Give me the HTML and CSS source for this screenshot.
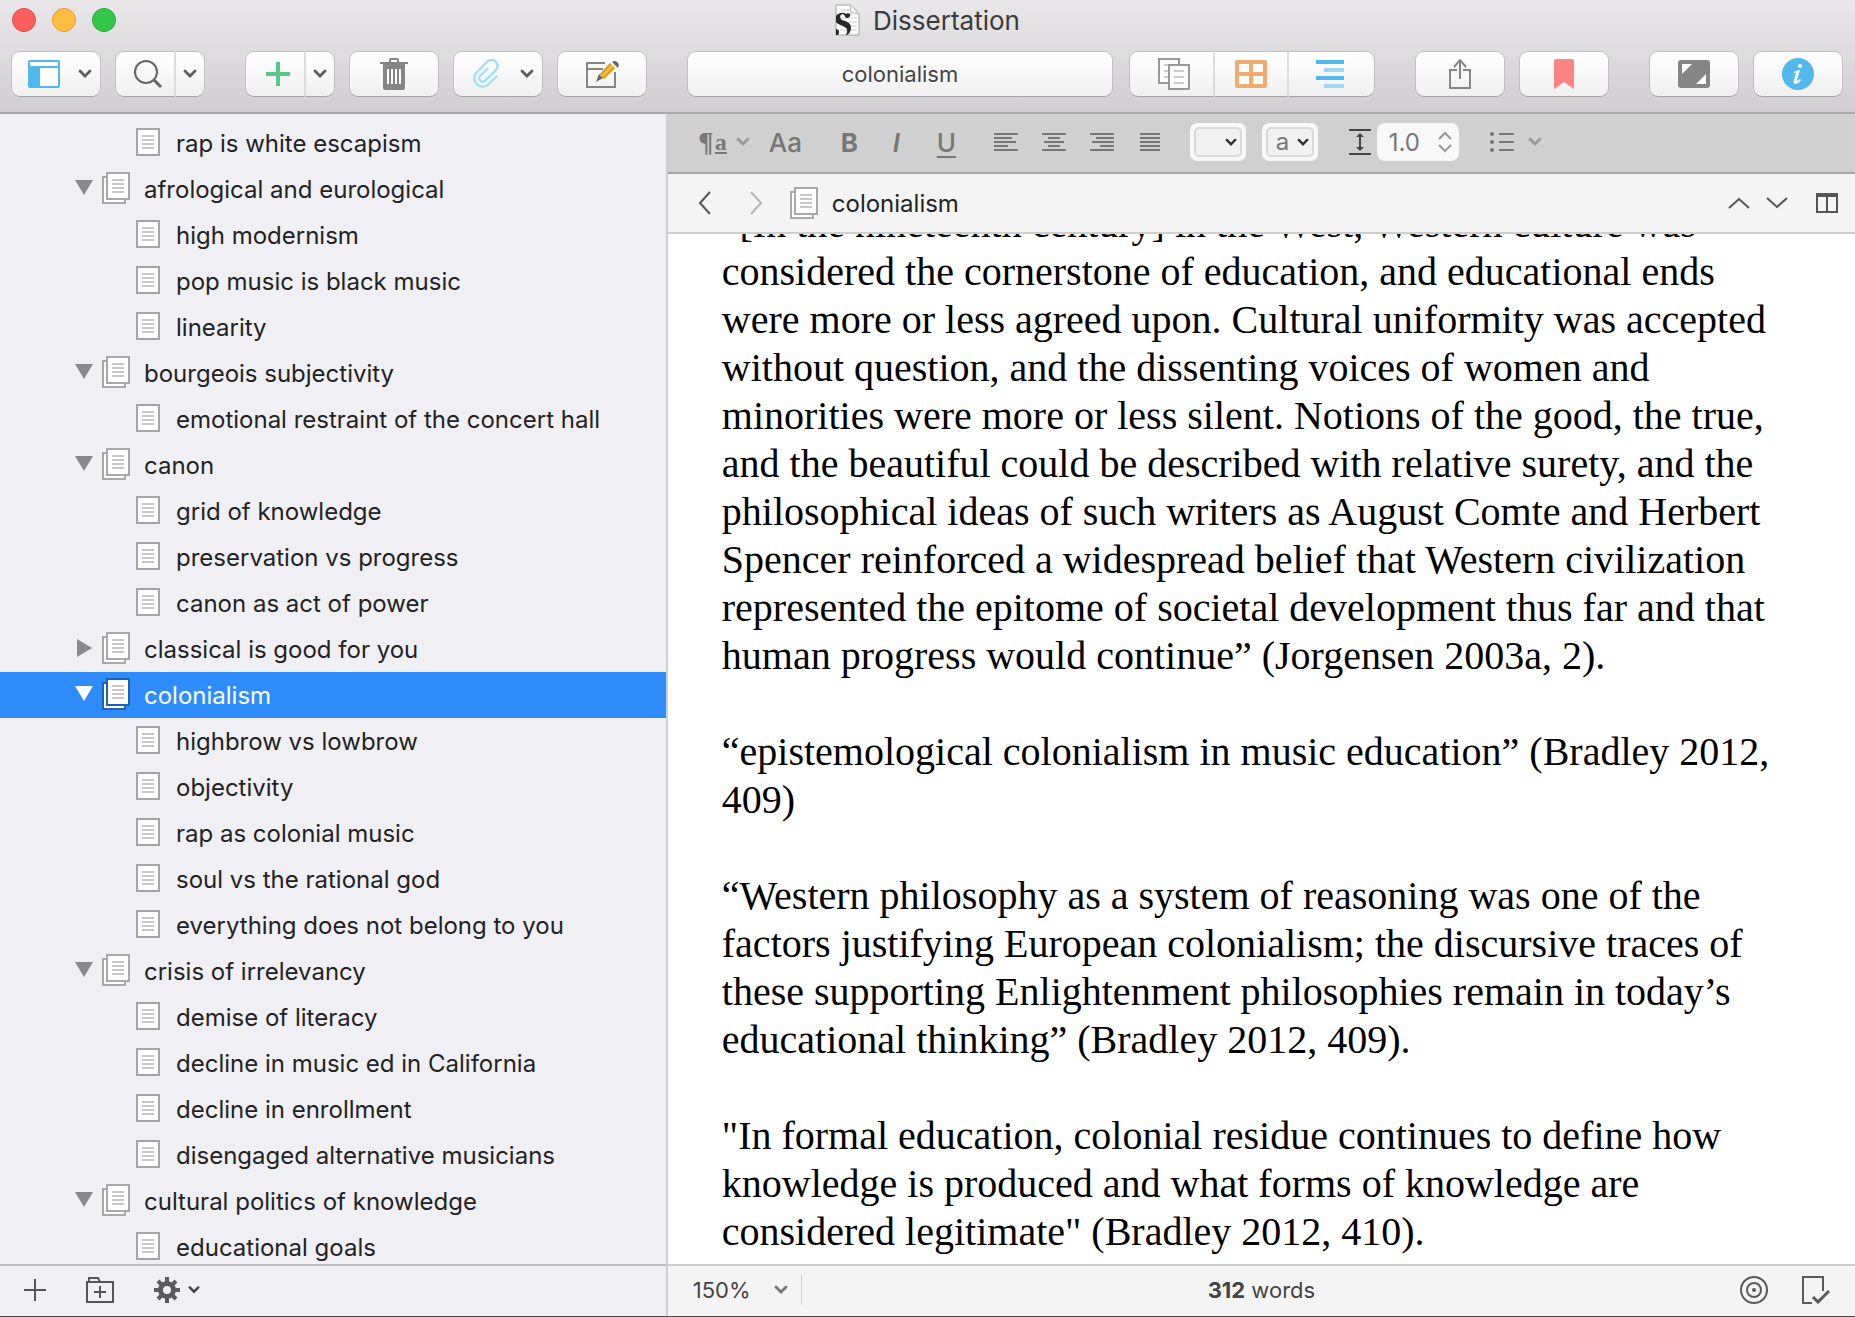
FILE: index.html
```html
<!DOCTYPE html>
<html lang="en">
<head>
<meta charset="utf-8">
<meta name="viewport" content="width=device-width, initial-scale=1">
<title>Dissertation</title>
<link rel="stylesheet" href="styles.css">
</head>
<body>
<svg class="symbols" aria-hidden="true">
  <symbol id="chevron" viewBox="0 0 14 10"><path d="M2 2l5 5 5-5" fill="none" stroke="currentColor" stroke-width="2.8" stroke-linecap="round"/></symbol>
  <symbol id="doc" viewBox="0 0 24 28"><path d="M1 1h22v26H1z" fill="#fff" stroke="#a5a5a5" stroke-width="2"/><path d="M6 8h12M6 12h12M6 16h12M6 20h12" stroke="#c8c8c8" stroke-width="2"/></symbol>
  <symbol id="stack" viewBox="0 0 28 32"><path d="M1 5h22v26H1z" fill="#fff" stroke="var(--edge, #a9a9a9)" stroke-width="2"/><path d="M5 1h22v26H5z" fill="#fff" stroke="var(--edge, #a9a9a9)" stroke-width="2"/><path d="M10 8h12M10 12h12M10 16h12M10 20h12" stroke="#c8c8c8" stroke-width="2"/></symbol>
  <symbol id="tri" viewBox="0 0 18 16"><path d="M0 0h18L9 15z" fill="currentColor"/></symbol>
  <symbol id="tri-right" viewBox="0 0 18 18"><path d="M2 0v18l15-9z" fill="currentColor"/></symbol>
</svg>

<header class="header">
  <div class="titlebar">
    <div class="lights">
      <button class="light red" aria-label="Close"></button>
      <button class="light yellow" aria-label="Minimize"></button>
      <button class="light green" aria-label="Zoom"></button>
    </div>
    <h1 class="title">
      <svg width="26" height="32" viewBox="0 0 26 32" aria-hidden="true"><path d="M1 1h15l8 9v21H1z" fill="#fff" stroke="#a0a0a0"/><path d="M5 6h11M5 10h13M5 14h17M5 18h17M5 22h17M5 26h17" stroke="#ccc"/><path d="M16 1l-1 7 9 2z" fill="#f4f4f4" stroke="#bbb"/><path d="M1 12C4 8 9 8 11 10c1-1 3-1 4 0 1 2-1 4-3 4-2 0-2-3-4-4-3 0-4 4-1 6 3 1 9 2 9 8 0 3-2 6-4 7h-1c1-2 2-5 0-7-3-3-8-3-10-6z" fill="#282828"/><path d="M1 25c3 0 4 3 2 6H1z" fill="#282828"/></svg>
      <span>Dissertation</span>
    </h1>
  </div>
  <div class="toolbar">
    <div class="group">
      <button class="tool with-menu" aria-label="View">
        <svg width="32" height="28" viewBox="0 0 32 28"><rect x="1" y="1" width="30" height="26" rx="1" fill="#fff" stroke="#4fb8ee" stroke-width="2"/><path d="M1 7h30" stroke="#4fb8ee" stroke-width="2"/><path d="M1 7h11v20H1z" fill="#4fb8ee"/></svg>
        <svg class="chev" width="14" height="10"><use href="#chevron"/></svg>
      </button>
      <div class="split">
        <button class="tool main" aria-label="Search"><svg width="28" height="28" viewBox="0 0 28 28"><circle cx="12" cy="12" r="11" fill="none" stroke="#666" stroke-width="2"/><path d="M20 20l7 7" stroke="#666" stroke-width="3"/></svg></button>
        <button class="tool drop" aria-label="Search options"><svg class="chev" width="14" height="10"><use href="#chevron"/></svg></button>
      </div>
    </div>
    <div class="group">
      <div class="split">
        <button class="tool main" aria-label="Add"><svg width="24" height="24" viewBox="0 0 24 24"><path d="M12 0v24M0 12h24" stroke="#56c98a" stroke-width="4"/></svg></button>
        <button class="tool drop" aria-label="Add options"><svg class="chev" width="14" height="10"><use href="#chevron"/></svg></button>
      </div>
      <button class="tool" aria-label="Trash"><svg width="28" height="32" viewBox="0 0 28 32"><path d="M10 4V2q0-1 1-1h6q1 0 1 1v2" fill="none" stroke="#858585" stroke-width="2"/><path d="M0 4h28v2H0z" fill="#858585"/><path d="M3 6h22v24q0 2-2 2H5q-2 0-2-2z" fill="#858585"/><path d="M8 11v15M12 11v15M16 11v15M20 11v15" stroke="#fff" stroke-width="2"/></svg></button>
      <button class="tool with-menu" aria-label="Attach">
        <svg width="32" height="30" viewBox="0 0 32 30"><path transform="translate(17 15) rotate(45)" d="M8.500-6V6A8.500 8.500 0 0 1-8.500 6V-9A6 6 0 0 1 3.500-9V6A3.500 3.500 0 0 1-3.500 6V-5" fill="none" stroke="#a3def6" stroke-width="2.400"/></svg>
        <svg class="chev" width="14" height="10"><use href="#chevron"/></svg>
      </button>
      <button class="tool" aria-label="Compose"><svg width="34" height="30" viewBox="0 0 34 30"><path d="M20 4H2v24h28V13M2 10h16" fill="none" stroke="#858585" stroke-width="2"/><path d="M15 15L25 4l5 5-11 11z" fill="#f4c035"/><path d="M15 15L25 4l1.500 1.500L16.500 16.500zM17.500 18.500L28.500 7.500 30 9 19 20z" fill="#dd9b22"/><path d="M14 15l-3 8 7-4zM27 3q2-2 5 0t1 6z" fill="#666"/></svg></button>
    </div>
    <button class="address">colonialism</button>
    <div class="split views">
      <button class="tool" aria-label="Document"><svg width="32" height="32" viewBox="0 0 32 32"><path d="M1 1h20v24H1z" fill="#fff" stroke="#999" stroke-width="2"/><path d="M6 7h8M6 13h8M6 19h8" stroke="#ccc" stroke-width="2"/><path d="M11 7h20v24H11z" fill="#fff" stroke="#999" stroke-width="2"/><path d="M16 13h10M16 19h10M16 25h10" stroke="#ccc" stroke-width="2"/></svg></button>
      <button class="tool" aria-label="Corkboard"><svg width="32" height="28" viewBox="0 0 32 28"><rect width="32" height="28" rx="2" fill="#f0ab72"/><path d="M4 4h10v8H4zM18 4h10v8H18zM4 16h10v8H4zM18 16h10v8H18z" fill="#fff"/></svg></button>
      <button class="tool" aria-label="Outline"><svg width="28" height="28" viewBox="0 0 28 28"><path d="M0 2h28M0 18h28" stroke="#4fb8ee" stroke-width="4"/><path d="M8 10h20M8 26h20" stroke="#9fd6f2" stroke-width="4"/></svg></button>
    </div>
    <div class="group">
      <button class="tool" aria-label="Share"><svg width="22" height="30" viewBox="0 0 22 30"><path d="M8 11H1v18h20V11h-7M11 20V1M5 8l6-7 6 7" fill="none" stroke="#858585" stroke-width="2"/></svg></button>
      <button class="tool" aria-label="Bookmark"><svg width="20" height="30" viewBox="0 0 20 30"><path d="M2 0h16q2 0 2 2v28l-10-7L0 30V2q0-2 2-2z" fill="#ff8381"/></svg></button>
    </div>
    <div class="group">
      <button class="tool" aria-label="Full screen"><svg width="32" height="28" viewBox="0 0 32 28"><rect width="32" height="28" rx="3" fill="#858585"/><path d="M4 4h10L4 14zM28 24H18l10-10z" fill="#fff"/></svg></button>
      <button class="tool" aria-label="Inspector"><svg width="32" height="32" viewBox="0 0 32 32"><circle cx="16" cy="16" r="16" fill="#52b9ee"/><circle cx="18" cy="8" r="2" fill="#fff"/><path d="M12 14q3-2 6-2l-3 10q0 2 3-1l1 1q-3 4-6 4-2-1-1-4l2-7q0-1-2 0z" fill="#fff"/></svg></button>
    </div>
  </div>
</header>

<div class="workspace">
  <nav class="sidebar" aria-label="Binder">
    <ul class="tree">
      <li><ul><li><a class="row leaf" href="#"><svg width="24" height="28"><use href="#doc"/></svg>rap is white escapism</a></li></ul></li>
      <li><a class="row" href="#"><svg class="tri" width="18" height="16"><use href="#tri"/></svg><svg width="28" height="32"><use href="#stack"/></svg>afrological and eurological</a>
        <ul>
          <li><a class="row leaf" href="#"><svg width="24" height="28"><use href="#doc"/></svg>high modernism</a></li>
          <li><a class="row leaf" href="#"><svg width="24" height="28"><use href="#doc"/></svg>pop music is black music</a></li>
          <li><a class="row leaf" href="#"><svg width="24" height="28"><use href="#doc"/></svg>linearity</a></li>
        </ul></li>
      <li><a class="row" href="#"><svg class="tri" width="18" height="16"><use href="#tri"/></svg><svg width="28" height="32"><use href="#stack"/></svg>bourgeois subjectivity</a>
        <ul>
          <li><a class="row leaf" href="#"><svg width="24" height="28"><use href="#doc"/></svg>emotional restraint of the concert hall</a></li>
        </ul></li>
      <li><a class="row" href="#"><svg class="tri" width="18" height="16"><use href="#tri"/></svg><svg width="28" height="32"><use href="#stack"/></svg>canon</a>
        <ul>
          <li><a class="row leaf" href="#"><svg width="24" height="28"><use href="#doc"/></svg>grid of knowledge</a></li>
          <li><a class="row leaf" href="#"><svg width="24" height="28"><use href="#doc"/></svg>preservation vs progress</a></li>
          <li><a class="row leaf" href="#"><svg width="24" height="28"><use href="#doc"/></svg>canon as act of power</a></li>
        </ul></li>
      <li><a class="row" href="#"><svg class="tri" width="18" height="18"><use href="#tri-right"/></svg><svg width="28" height="32"><use href="#stack"/></svg>classical is good for you</a></li>
      <li><a class="row selected" href="#" aria-current="page"><svg class="tri" width="18" height="16"><use href="#tri"/></svg><svg width="28" height="32"><use href="#stack"/></svg>colonialism</a>
        <ul>
          <li><a class="row leaf" href="#"><svg width="24" height="28"><use href="#doc"/></svg>highbrow vs lowbrow</a></li>
          <li><a class="row leaf" href="#"><svg width="24" height="28"><use href="#doc"/></svg>objectivity</a></li>
          <li><a class="row leaf" href="#"><svg width="24" height="28"><use href="#doc"/></svg>rap as colonial music</a></li>
          <li><a class="row leaf" href="#"><svg width="24" height="28"><use href="#doc"/></svg>soul vs the rational god</a></li>
          <li><a class="row leaf" href="#"><svg width="24" height="28"><use href="#doc"/></svg>everything does not belong to you</a></li>
        </ul></li>
      <li><a class="row" href="#"><svg class="tri" width="18" height="16"><use href="#tri"/></svg><svg width="28" height="32"><use href="#stack"/></svg>crisis of irrelevancy</a>
        <ul>
          <li><a class="row leaf" href="#"><svg width="24" height="28"><use href="#doc"/></svg>demise of literacy</a></li>
          <li><a class="row leaf" href="#"><svg width="24" height="28"><use href="#doc"/></svg>decline in music ed in California</a></li>
          <li><a class="row leaf" href="#"><svg width="24" height="28"><use href="#doc"/></svg>decline in enrollment</a></li>
          <li><a class="row leaf" href="#"><svg width="24" height="28"><use href="#doc"/></svg>disengaged alternative musicians</a></li>
        </ul></li>
      <li><a class="row" href="#"><svg class="tri" width="18" height="16"><use href="#tri"/></svg><svg width="28" height="32"><use href="#stack"/></svg>cultural politics of knowledge</a>
        <ul>
          <li><a class="row leaf" href="#"><svg width="24" height="28"><use href="#doc"/></svg>educational goals</a></li>
        </ul></li>
    </ul>
    <div class="footer binder-footer">
      <button class="plain" aria-label="Add item"><svg width="22" height="22" viewBox="0 0 22 22"><path d="M11 0v22M0 11h22" stroke="#555" stroke-width="2"/></svg></button>
      <button class="plain" aria-label="Add folder"><svg width="28" height="26" viewBox="0 0 28 26"><path d="M1 5h26v20H1zM3 5V1h9l2 4M14 9v12M8 15h12" fill="none" stroke="#555" stroke-width="2"/></svg></button>
      <button class="plain gear" aria-label="Actions">
        <svg width="26" height="26" viewBox="0 0 26 26"><g stroke="#5a5a5a" stroke-width="4"><path d="M13 0v5M13 21v5M0 13h5M21 13h5M4 4l4 4M18 18l4 4M4 22l4-4M18 8l4-4"/></g><circle cx="13" cy="13" r="6.500" fill="none" stroke="#5a5a5a" stroke-width="5"/></svg>
        <svg width="12" height="10"><use href="#chevron"/></svg>
      </button>
    </div>
  </nav>

  <main class="pane">
    <div class="format">
      <button class="plain styles" aria-label="Styles"><span class="pilcrow">¶</span><span class="style-a">a</span><svg class="faint" width="14" height="10"><use href="#chevron"/></svg></button>
      <button class="plain font-btn" aria-label="Font">Aa</button>
      <div class="letters">
        <button class="plain bold" aria-label="Bold">B</button>
        <button class="plain italic" aria-label="Italic">I</button>
        <button class="plain under" aria-label="Underline">U</button>
      </div>
      <div class="aligns">
        <button class="plain" aria-label="Align left"><svg width="24" height="18" viewBox="0 0 24 18"><path d="M0 1h24M0 5h18M0 9h22M0 13h14M0 17h24" stroke="#777" stroke-width="2"/></svg></button>
        <button class="plain" aria-label="Align center"><svg width="24" height="18" viewBox="0 0 24 18"><path d="M0 1h24M6 5h12M2 9h20M6 13h12M0 17h24" stroke="#777" stroke-width="2"/></svg></button>
        <button class="plain" aria-label="Align right"><svg width="24" height="18" viewBox="0 0 24 18"><path d="M0 1h24M6 5h18M2 9h22M10 13h14M0 17h24" stroke="#777" stroke-width="2"/></svg></button>
        <button class="plain" aria-label="Justify"><svg width="24" height="18" viewBox="0 0 24 18"><path d="M2 1h20M2 5h20M2 9h20M2 13h20M2 17h20" stroke="#777" stroke-width="2"/></svg></button>
      </div>
      <div class="colors">
        <label class="swatch"><select aria-label="Text color"><option></option></select><svg width="12" height="9"><use href="#chevron"/></svg></label>
        <label class="swatch"><select aria-label="Highlight color"><option>a</option></select><svg width="12" height="9"><use href="#chevron"/></svg></label>
      </div>
      <div class="spacing">
        <svg width="22" height="26" viewBox="0 0 22 26" aria-hidden="true"><path d="M0 1h22M0 25h22M11 6v14" stroke="#444" stroke-width="2"/><path d="M7 8l4-4 4 4zM7 18l4 4 4-4z" fill="#444"/></svg>
        <label class="spin"><input type="text" value="1.0" aria-label="Line spacing"><svg width="14" height="22" viewBox="0 0 14 22"><path d="M1 8l6-6 6 6M1 14l6 6 6-6" fill="none" stroke="#999" stroke-width="2"/></svg></label>
      </div>
      <button class="plain list-btn" aria-label="Lists"><svg width="24" height="20" viewBox="0 0 24 20"><path d="M9 2h15M9 10h15M9 18h15" stroke="#777" stroke-width="2"/><circle cx="2" cy="2" r="2" fill="#777"/><circle cx="2" cy="10" r="2" fill="#777"/><circle cx="2" cy="18" r="2" fill="#777"/></svg><svg class="faint" width="14" height="10"><use href="#chevron"/></svg></button>
    </div>

    <div class="nav">
      <button class="plain" aria-label="Back"><svg width="14" height="24" viewBox="0 0 14 24"><path d="M13 1L3 12l10 11" fill="none" stroke="#555" stroke-width="2"/></svg></button>
      <button class="plain" aria-label="Forward"><svg width="14" height="24" viewBox="0 0 14 24"><path d="M2 1l10 11L2 23" fill="none" stroke="#b5b5b5" stroke-width="2"/></svg></button>
      <h2 class="crumb"><svg width="28" height="32" aria-hidden="true"><use href="#stack"/></svg>colonialism</h2>
      <div class="nav-right">
        <button class="plain" aria-label="Previous document"><svg width="22" height="12" viewBox="0 0 22 12"><path d="M1 11l10-9 10 9" fill="none" stroke="#555" stroke-width="2"/></svg></button>
        <button class="plain" aria-label="Next document"><svg width="22" height="12" viewBox="0 0 22 12"><path d="M1 1l10 9 10-9" fill="none" stroke="#555" stroke-width="2"/></svg></button>
        <button class="plain split-btn" aria-label="Split editor"><svg width="22" height="20" viewBox="0 0 22 20"><path d="M1 2h20v17H1zM11 2v17" fill="none" stroke="#555" stroke-width="2"/><path d="M0 0h22v4H0z" fill="#555"/></svg></button>
      </div>
    </div>

    <article class="editor">
      <p>“[In the nineteenth century] in the West, Western culture was<br>considered the cornerstone of education, and educational ends<br>were more or less agreed upon. Cultural uniformity was accepted<br>without question, and the dissenting voices of women and<br>minorities were more or less silent. Notions of the good, the true,<br>and the beautiful could be described with relative surety, and the<br>philosophical ideas of such writers as August Comte and Herbert<br>Spencer reinforced a widespread belief that Western civilization<br>represented the epitome of societal development thus far and that<br>human progress would continue” (Jorgensen 2003a, 2).</p>
      <p>“epistemological colonialism in music education” (Bradley 2012,<br>409)</p>
      <p>“Western philosophy as a system of reasoning was one of the<br>factors justifying European colonialism; the discursive traces of<br>these supporting Enlightenment philosophies remain in today’s<br>educational thinking” (Bradley 2012, 409).</p>
      <p>"In formal education, colonial residue continues to define how<br>knowledge is produced and what forms of knowledge are<br>considered legitimate" (Bradley 2012, 410).</p>
    </article>

    <div class="footer editor-footer">
      <label class="scale"><select aria-label="Zoom"><option>150%</option></select><svg width="14" height="10"><use href="#chevron"/></svg></label>
      <div class="count"><b>312</b> words</div>
      <div class="footer-right">
        <button class="plain" aria-label="Targets"><svg width="28" height="28" viewBox="0 0 28 28"><circle cx="14" cy="14" r="13" fill="none" stroke="#5a5a5a" stroke-width="2"/><circle cx="14" cy="14" r="7" fill="none" stroke="#5a5a5a" stroke-width="2"/><circle cx="14" cy="14" r="2" fill="#5a5a5a"/></svg></button>
        <button class="plain" aria-label="Include in compile"><svg width="28" height="28" viewBox="0 0 28 28"><path d="M10 27H1V1h20v14" fill="none" stroke="#5a5a5a" stroke-width="2"/><path d="M11 21l5 5 11-11" fill="none" stroke="#5a5a5a" stroke-width="3"/></svg></button>
      </div>
    </div>
  </main>
</div>
</body>
</html>
```

FILE: styles.css
```css
* { box-sizing: border-box; }

body {
  margin: 0;
  height: 100vh;
  display: flex;
  flex-direction: column;
  overflow: hidden;
  border-bottom: 1px solid #4c4c4c;
  font-family: Inter, "Liberation Sans", sans-serif;
  font-size: 24px;
  color: #222;
  background: #fff;
}

ul { list-style: none; margin: 0; padding: 0; }
svg { display: block; flex: none; }
button, select, input { font: inherit; color: inherit; margin: 0; padding: 0; }
.symbols { position: absolute; width: 0; height: 0; }

/* Window header */
.header {
  flex: none;
  background: linear-gradient(#e9e7ea, #d0ced1);
  border-bottom: 2px solid #a9a9a9;
}
.titlebar {
  display: grid;
  grid-template-columns: 1fr auto 1fr;
  align-items: center;
  height: 40px;
  padding: 0 12px;
}
.lights { display: flex; gap: 16px; }
.light { width: 24px; height: 24px; border-radius: 50%; border: 1px solid; }
.red { background: #fc605c; border-color: #e14942; }
.yellow { background: #fdbc40; border-color: #df9f32; }
.green { background: #34c84a; border-color: #27a833; }
.title {
  display: flex;
  align-items: center;
  gap: 12px;
  margin: 0;
  font-size: 26px;
  font-weight: 400;
  color: #3a3a3a;
}
.toolbar {
  display: flex;
  gap: 40px;
  padding: 11px 12px 15px 11px;
}
.group { display: flex; gap: 14px; }
.tool, .address {
  height: 46px;
  border: 1px solid #c2c0c3;
  border-bottom-color: #a5a3a6;
  border-radius: 9px;
  background: linear-gradient(#fff, #f0f0f0);
}
.tool {
  width: 90px;
  display: flex;
  align-items: center;
  justify-content: center;
}
.with-menu { justify-content: space-between; padding: 0 8px 0 16px; }
.chev { color: #5c5c5c; }
.split { display: flex; }
.split .main { width: 61px; padding-left: 6px; }
.split .drop { width: 29px; }
.split .tool:not(:first-child) { border-left: 0; border-top-left-radius: 0; border-bottom-left-radius: 0; }
.split .tool:not(:last-child) { border-right: 2px solid #dcdcdc; border-top-right-radius: 0; border-bottom-right-radius: 0; }
.address { flex: 1; font-size: 22px; color: #444; }
.views { margin-left: -24px; }
.views .tool { width: 86px; }
.views .tool:nth-child(2) { width: 74px; }
.views .tool:first-child { padding-left: 4px; }
.views .tool:last-child { padding-right: 4px; }

/* Two columns */
.workspace {
  flex: 1;
  min-height: 0;
  display: grid;
  grid-template-columns: 36% 1fr;
}
.sidebar {
  display: flex;
  flex-direction: column;
  min-height: 0;
  background: #f0eff4;
  border-right: 2px solid #cfcfcf;
}
.tree { flex: 1; min-height: 0; overflow: hidden; padding-top: 6px; }
.row {
  display: flex;
  align-items: center;
  height: 46px;
  padding-left: 75px;
  color: #222;
  text-decoration: none;
  white-space: nowrap;
}
.row svg { margin-right: 14px; margin-bottom: 2px; }
.row .tri { margin-right: 9px; color: #8a8a8a; }
.leaf { padding-left: 136px; }
.leaf svg { margin-right: 16px; }
.selected { --edge: #1f62b4; background: #2f8cfd; color: #fff; }
.row.selected .tri { color: #fff; }

.footer {
  flex: none;
  display: flex;
  align-items: center;
  height: 52px;
  border-top: 2px solid #cfcfcf;
  color: #444;
}
.binder-footer { gap: 40px; padding-left: 24px; padding-bottom: 2px; border-color: #bfbec3; }
.plain {
  display: flex;
  align-items: center;
  border: 0;
  background: none;
}
.gear { gap: 8px; }

/* Editor column */
.pane { display: flex; flex-direction: column; min-width: 0; min-height: 0; }
.format {
  flex: none;
  display: flex;
  align-items: center;
  height: 60px;
  padding: 0 0 2px 29px;
  background: #d0d0d0;
  border-bottom: 2px solid #a8a8a8;
  color: #777;
}
.faint { color: #9a9a9a; }
.styles { width: 72px; font-family: "Liberation Serif", serif; font-weight: 700; }
.pilcrow { width: 18px; font-size: 28px; }
.style-a { width: 21px; font-size: 24px; text-align: left; text-decoration: underline; }
.font-btn { width: 72px; font-size: 26px; font-weight: 500; }
.letters { display: flex; width: 153px; font-size: 26px; }
.letters .plain { width: 48px; }
.bold { font-weight: 700; }
.italic { font-style: italic; font-weight: 600; padding-left: 4px; }
.under { font-weight: 500; text-decoration: underline; text-underline-offset: 4px; }
.aligns { display: flex; gap: 24px; width: 196px; }
.colors { display: flex; gap: 16px; }
.swatch, .scale, .spin { display: grid; align-items: center; }
.swatch > *, .scale > *, .spin > * { grid-area: 1 / 1; }
.swatch svg, .scale svg, .spin svg { justify-self: end; pointer-events: none; }
.swatch select, .scale select { appearance: none; }
.swatch {
  width: 56px;
  height: 38px;
  padding: 4px;
  border-radius: 7px;
  background: #f8f8f8;
}
.swatch select {
  width: 100%;
  height: 30px;
  padding-left: 8px;
  border: 2px solid #dadada;
  border-radius: 5px;
  background: #f1f1f1;
  line-height: 24px;
}
.swatch svg { margin-right: 5px; color: #333; }
.spacing { display: flex; align-items: center; gap: 6px; margin-left: 31px; }
.spin { width: 82px; }
.spin input {
  width: 100%;
  height: 38px;
  padding-left: 12px;
  border: 0;
  border-radius: 8px;
  background: #f8f8f8;
}
.spin svg { margin-right: 7px; }
.list-btn { gap: 14px; margin-left: 31px; }

.nav {
  flex: none;
  display: flex;
  align-items: center;
  height: 60px;
  padding: 0 17px 0 29px;
  gap: 38px;
  background: #f4f4f4;
  border-bottom: 2px solid #cfcfcf;
}
.crumb {
  display: flex;
  align-items: center;
  gap: 14px;
  margin: 0 0 0 -11px;
  font-size: 24px;
  font-weight: 400;
}
.nav-right { display: flex; align-items: center; gap: 16px; margin-left: auto; }
.split-btn { margin-left: 12px; }

/* The text is scrolled, so it rests on the bottom edge */
.editor {
  flex: 1;
  min-height: 0;
  display: flex;
  flex-direction: column;
  justify-content: flex-end;
  gap: 48px;
  overflow: hidden;
  padding: 0 54px 8px;
  font-family: "Liberation Serif", serif;
  font-size: 40px;
  line-height: 48px;
  color: #000;
  white-space: nowrap;
}
.editor p { margin: 0; }

.editor-footer {
  display: grid;
  grid-template-columns: 1fr auto 1fr;
  padding: 0 25px 2px;
  background: #f4f4f4;
}
.scale {
  width: 109px;
  height: 30px;
  padding-right: 13px;
  border-right: 1px solid #d0d0d0;
}
.scale select { border: 0; background: none; font-size: 22px; }
.scale svg { color: #777; }
.count { font-size: 22px; }
.footer-right { display: flex; gap: 34px; justify-content: flex-end; }
```
